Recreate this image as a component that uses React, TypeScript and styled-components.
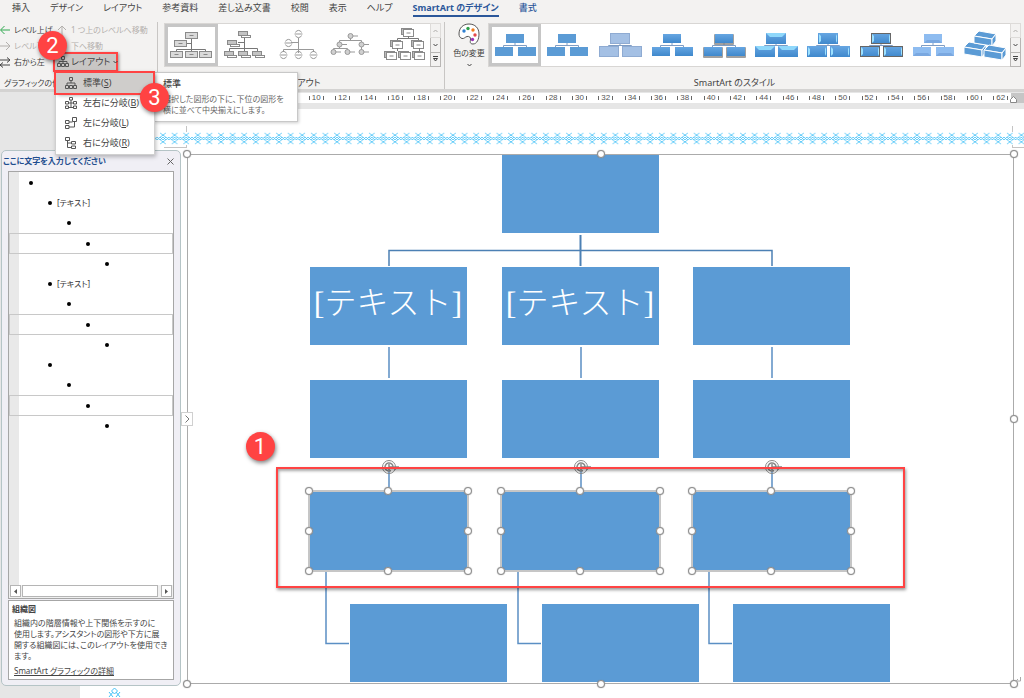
import React from "react";
import styled, { createGlobalStyle, css } from "styled-components";

const BLUE = "#5b9bd5";
const RED = "#ff4343";

const GlobalStyle = createGlobalStyle`
  *, *::before, *::after { box-sizing: border-box; }
  body {
    margin: 0;
    background: #e6e6e6;
    color: #444;
    font-family: "Noto Sans", "Noto Sans CJK JP", sans-serif;
    font-size: 9px;
    line-height: 12px;
    font-feature-settings: "palt";
  }
  button {
    font: inherit;
    font-feature-settings: inherit;
    color: inherit;
    background: none;
    border: 0;
    padding: 0;
    margin: 0;
    white-space: nowrap;
  }
  svg { display: block; flex: none; }
  ul { list-style: none; margin: 0; padding: 0; }
`;

const Page = styled.div`
  display: flex;
  flex-direction: column;
  min-height: 100vh;
  overflow: hidden;
`;

/* ---------- ribbon ---------- */

const Ribbon = styled.header`
  background: #f3f2f1;
  border-bottom: 3px solid #d4d3d2;
  position: relative;
  z-index: 2;
`;

const Tabs = styled.nav`
  display: flex;
  gap: 20px;
  height: 22px;
  padding-left: 12px;
`;

const Tab = styled.button<{ $active?: boolean; $accent?: boolean }>`
  height: 17px;
  padding-top: 1px;
  border-bottom: 2px solid ${(p) => (p.$active ? "#2b579a" : "transparent")};
  color: ${(p) => (p.$accent ? "#2b579a" : "#444")};
  font-weight: ${(p) => (p.$active ? 700 : p.$accent ? 500 : 400)};
`;

const Groups = styled.div`
  display: flex;
  height: 67px;
`;

const Group = styled.section<{ $width?: number }>`
  display: flex;
  flex-direction: column;
  justify-content: space-between;
  ${(p) => (p.$width ? css`flex: none; width: ${p.$width}px;` : css`flex: 1; min-width: 0;`)}
  & + & { border-left: 1px solid #c8c6c4; }
`;

const GroupLabel = styled.div<{ $left?: boolean }>`
  text-align: ${(p) => (p.$left ? "left" : "center")};
  font-size: ${(p) => (p.$left ? 8 : 9)}px;
  padding: 0 4px;
  white-space: nowrap;
`;

const Commands = styled.div`
  display: grid;
  grid-template-columns: 57px 1fr;
  grid-auto-rows: 16px;
  font-size: 8px;
`;

const Command = styled.button`
  display: flex;
  align-items: center;
  gap: 3px;
  &:disabled { color: #b3b0ad; }
`;

const LayoutButton = styled.button`
  display: flex;
  align-items: center;
  align-self: center;
  gap: 2px;
  width: 65px;
  height: 20px;
  margin-left: -4px;
  padding-left: 2px;
  background: #c8c6c4;
  border: 2px solid ${RED};
  box-shadow: 1px 1px 3px rgba(0, 0, 0, 0.4);
  font-size: 9px;
`;

const GroupBody = styled.div`
  display: flex;
  padding: 1px 3px 0 6px;
`;

const Gallery = styled.div`
  display: flex;
  flex: 1;
  min-width: 0;
  height: 44px;
  background: #fff;
  border: 1px solid #d8d6d4;
`;

const GalleryItem = styled.button<{ $selected?: boolean }>`
  display: flex;
  align-items: center;
  justify-content: center;
  flex: 1;
  height: 42px;
  border: 3px solid ${(p) => (p.$selected ? "#c6c6c6" : "transparent")};
  min-width: 0;
`;

const ScrollButtons = styled.div`
  display: flex;
  flex-direction: column;
  width: 11px;
  flex: none;
  margin: -1px;
`;

const ScrollButton = styled.button`
  display: flex;
  align-items: center;
  justify-content: center;
  flex: 1;
  background: #f3f2f1;
  border: 1px solid #b8b6b4;
  &:disabled { border-color: #dddbd9; }
  & + & { border-top-width: 0; }
`;

const ColorButton = styled.button`
  display: flex;
  flex-direction: column;
  align-items: center;
  width: 36px;
  gap: 2px;
  margin-right: 1px;
  font-size: 8px;
`;

/* ---------- drop-down, tooltip, badges ---------- */

const Menu = styled.ul`
  position: absolute;
  left: 55px;
  top: 71px;
  width: 100px;
  padding: 1px 0;
  background: #fff;
  border: 1px solid #d0d0d0;
  box-shadow: 1px 2px 4px rgba(0, 0, 0, 0.25);
`;

const MenuItem = styled.button<{ $active?: boolean }>`
  display: flex;
  align-items: center;
  gap: 6px;
  width: 97px;
  height: 20px;
  padding-left: 9px;
  ${(p) =>
    p.$active &&
    css`
      background: #cfcdcb;
      outline: 2px solid ${RED};
      box-shadow: 2px 2px 4px rgba(0, 0, 0, 0.4);
    `}
`;

const Tooltip = styled.div`
  position: absolute;
  left: 154px;
  top: 72px;
  width: 144px;
  height: 50px;
  padding: 5px 8px;
  background: #fff;
  border: 1px solid #c8c8c8;
  box-shadow: 1px 1px 3px rgba(0, 0, 0, 0.2);
  font-size: 8px;
  line-height: 11px;
  color: #666;
  white-space: nowrap;
  h3 { margin: 0 0 4px; font-size: 9px; line-height: 11px; font-weight: 500; color: #444; }
  p { margin: 0; }
`;

const Badge = styled.span<{ $x: number; $y: number }>`
  position: absolute;
  left: ${(p) => p.$x}px;
  top: ${(p) => p.$y}px;
  width: 29px;
  height: 29px;
  border-radius: 50%;
  background: ${RED};
  color: #fff;
  font: 22px/29px Roboto, sans-serif;
  text-align: center;
  box-shadow: 1px 2px 4px rgba(0, 0, 0, 0.5);
  z-index: 3;
`;

/* ---------- document ---------- */

const Ruler = styled.div`
  display: flex;
  height: 10px;
  margin: 1px 0 6px 80px;
  padding-left: 223px;
  background: linear-gradient(to left, #c6c6c6 13px, #fff 13px);
`;

const RulerCell = styled.span`
  display: flex;
  flex: 1;
  align-items: center;
  justify-content: center;
  gap: 2px;
  font: 8px/10px "Liberation Sans", sans-serif;
  color: #555;
  &::before, &::after { content: ""; width: 1px; height: 4px; background: #666; }
`;

const RulerEnd = styled.span`
  display: flex;
  width: 14px;
  margin-left: -4px;
`;

const Sheet = styled.main`
  flex: 1;
  display: flex;
  flex-direction: column;
  background: linear-gradient(to right, #e6e6e6 80px, #fff 80px);
`;

const SheetTop = styled.div`
  display: grid;
  grid-template-columns: 23px 1fr 12px;
  height: 41px;
  padding: 17px 0 2px 164px;
`;

const CropMark = styled.span<{ $right?: boolean }>`
  grid-row: 1;
  grid-column: ${(p) => (p.$right ? 3 : 1)};
  border: 0 solid #c4c4c4;
  border-bottom-width: 1px;
  ${(p) => (p.$right ? "border-left-width: 1px;" : "border-right-width: 1px;")}
`;

const ArtBorder = styled.div`
  grid-row: 1;
  grid-column: 1 / -1;
  height: 13px;
  margin: 6px 0 0 -30px;
  background: #fff;
  z-index: 1;
`;

const Row = styled.div`
  display: flex;
  flex: 1;
`;

const BottomStrip = styled.div`
  height: 12px;
  padding: 1px 0 0 108px;
  overflow: hidden;
`;

/* ---------- text pane ---------- */

const Pane = styled.aside`
  display: flex;
  flex-direction: column;
  flex: none;
  width: 180px;
  margin-left: 1px;
  padding: 0 6px 5px 6px;
  background: #f0eff5;
  border: 1px solid #b5c4c6;
  border-radius: 5px;
  font-size: 8px;
`;

const PaneHeader = styled.div`
  display: flex;
  align-items: center;
  justify-content: space-between;
  height: 20px;
  margin: 0 0 0 -5px;
  h2 { margin: 0; font-size: 8px; line-height: 12px; font-weight: 700; color: #1f4e8f; }
`;

const Outline = styled.div`
  flex: 1;
  display: flex;
  flex-direction: column;
  justify-content: space-between;
  border: 1px solid #a6a6a6;
  background: linear-gradient(to right, #e9e9e9 10px, #fff 10px);
  ul { padding-top: 1px; }
`;

const OutlineRow = styled.li<{ $level: number; $selected?: boolean }>`
  display: flex;
  align-items: center;
  gap: 5px;
  height: ${(p) => (p.$selected ? 21 : 20)}px;
  padding-left: ${(p) => p.$level * 19}px;
  border: 1px solid ${(p) => (p.$selected ? "#c8c8c8" : "transparent")};
  color: #333;
  &::before { content: ""; width: 4px; height: 4px; border-radius: 50%; background: #000; }
`;

const ScrollBar = styled.div`
  display: flex;
  gap: 1px;
  height: 13px;
  padding: 0 1px 1px;
  background: #f0f0f0;
`;

const ScrollArrow = styled.button`
  display: flex;
  align-items: center;
  justify-content: center;
  width: 11px;
  background: #fff;
  border: 1px solid #b5b5b5;
`;

const Thumb = styled.div`
  flex: 1;
  margin-right: 2px;
  background: #fff;
  border: 1px solid #b5b5b5;
`;

const Description = styled.div`
  margin-top: 1px;
  height: 80px;
  padding: 2px 3px;
  border: 1px solid #a6a6a6;
  background: #fff;
  h3 { margin: 0 0 2px; font-size: 8px; line-height: 12px; }
  p { margin: 0 0 4px 2px; line-height: 11px; white-space: nowrap; }
  a { margin-left: 2px; color: #444; display: block; line-height: 12px; }
`;

/* ---------- diagram ---------- */

const Frame = styled.div`
  position: relative;
  flex: 1;
  display: flex;
  justify-content: center;
  margin: 4px 10px 2px 6px;
  border: 1px solid #ababab;
  background: #fff;
`;

const HandleBox = styled.div`
  position: absolute;
  inset: -1px;
`;

const Handle = styled.i<{ $x: number; $y: number }>`
  position: absolute;
  left: ${(p) => p.$x}%;
  top: ${(p) => p.$y}%;
  width: 8px;
  height: 8px;
  margin: -4px;
  border: 1px solid #8a8a8a;
  border-radius: 50%;
  background: #fff;
  box-shadow: 0 0 1px #8a8a8a;
`;

const PaneToggle = styled.button`
  position: absolute;
  left: -7px;
  top: 257px;
  width: 12px;
  height: 14px;
  display: flex;
  align-items: center;
  justify-content: center;
  background: #fff;
  border: 1px solid #d0d0d0;
`;

const Diagram = styled.div`
  position: relative;
  width: 582px;
  height: 528px;
  flex: none;
`;

const Connectors = styled.svg`
  position: absolute;
  inset: 0;
`;

const Node = styled.div<{ $x: number; $y: number; $selected?: boolean }>`
  position: absolute;
  left: ${(p) => p.$x}px;
  top: ${(p) => p.$y}px;
  width: 157px;
  height: 78px;
  background: ${BLUE};
  color: #fff;
  font: 400 32px/72px "Liberation Serif", "Noto Sans CJK JP", serif;
  font-weight: 300;
  font-feature-settings: normal;
  text-align: center;
  white-space: nowrap;
  ${(p) => p.$selected && css`box-shadow: 0 0 0 2px #c6c6c6;`}
`;

const RotateHandle = styled.svg`
  position: absolute;
  left: 71px;
  top: -33px;
`;

const Highlight = styled.div`
  position: absolute;
  left: -34px;
  top: 312px;
  width: 629px;
  height: 121px;
  border: 2px solid ${RED};
  box-shadow: 1px 2px 3px rgba(0, 0, 0, 0.4), inset 1px 2px 3px rgba(0, 0, 0, 0.35);
`;

const ReturnMark = styled.svg`
  position: absolute;
  right: -8px;
  bottom: 0;
`;

/* ---------- drawings ---------- */

const Arrow = ({ kind }: { kind: "left" | "right" | "up" | "down" | "swap" }) => {
  const paths = {
    left: "M10 5H1M4.500 1L0.500 5L4.500 9",
    right: "M0 5H10M6 1L10 5L6 9",
    up: "M5 10V1M1 5L5 1L9 5",
    down: "M5 0V9M1 5L5 9L9 5",
    swap: "M0 3H10M7 0.500L10 3L7 5.500M10 8H0M3 5.500L0 8L3 10.500",
  };
  const color = kind === "left" ? "#2fa84f" : kind === "swap" ? "#444" : "#b3b0ad";
  return (
    <svg width="11" height="11" viewBox="0 0 11 11" fill="none" stroke={color}>
      <path d={paths[kind]} />
    </svg>
  );
};

const Chevron = ({ up, bar, faint }: { up?: boolean; bar?: boolean; faint?: boolean }) => (
  <svg width="7" height="8" viewBox="0 0 7 8" fill="none" stroke={faint ? "#b0aeac" : "#444"}>
    {bar && <path d="M1 1.500H6" />}
    <path d={up ? "M1.500 5L3.500 3L5.500 5" : bar ? "M1.500 3.500H5.500L3.500 6Z" : "M1.500 3L3.500 5L5.500 3"} />
  </svg>
);

const menuIcons: Record<string, string> = {
  std: "M4.500 .5h3v3h-3zM.5 8.500h3v3h-3zM8.500 8.500h3v3h-3zM6 3.500V6M2 8.500V6h8v2.500M4.500 8.500h3v3h-3z",
  both: "M4.500 .5h3v2.500h-3zM.5 4.500h3v2.500h-3zM8.500 4.500h3v2.500h-3zM.5 9h3v2.500h-3zM8.500 9h3v2.500h-3zM6 3v7.500M3.500 6h5M3.500 10.500h5",
  left: "M7.500 .5h4v4h-4zM.5 3.500h3.500v3h-3.500zM.5 8.500h3.500v3h-3.500zM4 5h3.500M4 10h5.500V4.500",
  right: "M.5 .5h4v3h-4zM6.500 4.500h4v2.500h-4zM6.500 9h4v2.500h-4zM2.500 3.500v7h4M2.500 6h4",
  tree: "M4.500 .5h3v3h-3zM.5 7.500h3v3h-3zM8.500 7.500h3v3h-3zM6 3.500V5.500M2 7.500V5.500h8v2M4.500 7.500h3v3h-3zM6 5.500v2",
};

const MenuIcon = ({ kind }: { kind: string }) => (
  <svg width="12" height="12" viewBox="0 0 12 12" fill="none" stroke="#555">
    <path d={menuIcons[kind]} />
  </svg>
);

const GrayBox = ({ x, y, w = 12, h = 6, fill = "#d9d9d9" }: { x: number; y: number; w?: number; h?: number; fill?: string }) => (
  <g>
    <rect x={x + 0.5} y={y + 0.5} width={w} height={h} fill={fill} stroke="#8a8a8a" />
    <path d={`M${x + w / 2 - 1.5} ${y + h / 2 + 0.5}h4`} stroke="#888" />
  </g>
);

const PlainBox = ({ x, y, w, h, fill }: { x: number; y: number; w: number; h: number; fill: string }) => (
  <rect x={x + 0.5} y={y + 0.5} width={w} height={h} fill={fill} stroke="#8a8a8a" />
);

const layoutDrawings: React.ReactNode[] = [
  <g key="a">
    <path d="M21.500 8V22M13 13.500H21M6.500 21V19.500H35.500V21" stroke="#777" fill="none" />
    <GrayBox x={15} y={2} /><GrayBox x={4} y={10} />
    <GrayBox x={0} y={21} /><GrayBox x={15} y={21} /><GrayBox x={29} y={21} />
  </g>,
  <g key="b">
    <path d="M21.500 7V22M15 12.500H21M6.500 22V18.500H34.500V22" stroke="#777" fill="none" />
    {[[15, 1], [4, 10], [1, 21], [15, 21], [29, 21]].map(([x, y]) => (
      <g key={`${x}-${y}`}>
        <PlainBox x={x} y={y} w={9} h={4} fill="#c4c4c4" />
        <PlainBox x={x + 3} y={y + 4} w={9} h={2} fill="#fff" />
      </g>
    ))}
  </g>,
  <g key="c" fill="none" stroke="#999">
    <path d="M21.500 8V23M14 12.500H21M6.500 22V19.500H36.500V22M21.500 19V22" />
    {[[21.5, 4], [11.5, 13], [6.5, 25], [21.5, 25], [36.5, 25]].map(([x, y]) => (
      <path key={`${x}-${y}`} d={`M${x - 3} ${y - 1.5}a3.200 3.200 0 0 1 6 0M${x - 3} ${y + 1.5}a3.200 3.200 0 0 0 6 0M${x - 4} ${y}h8`} />
    ))}
  </g>,
  <g key="d" stroke="#999" fill="#d0d0d0">
    <path d="M20.500 7V10.500M9.500 14V10.500H31.500V14M3.500 21V18.500H17.500V21M9.500 17V18.500M31.500 17V21" fill="none" />
    {[[20.5, 6], [9.5, 14.5], [31.5, 14.5], [3.5, 22], [17.5, 22], [31.5, 22]].map(([x, y]) => (
      <g key={`${x}-${y}`}><circle cx={x} cy={y} r="2.500" /><path d={`M${x + 2.5} ${y}h5`} /></g>
    ))}
  </g>,
  <g key="e">
    {[[18, -2], [7, 10], [28, 10], [1, 21], [15, 21], [29, 21]].map(([x, y]) => (
      <g key={`${x}-${y}`}>
        <PlainBox x={x} y={y} w={10} h={6} fill="#bbb" />
        <GrayBox x={x + 2} y={y + 1} w={10} h={7} fill="#fff" />
      </g>
    ))}
    <path d="M25.500 6V8.500M14.500 10V8.500H35.500V10M14.500 18V21M36.500 18V21" stroke="#777" fill="none" />
  </g>,
];

const LayoutThumb = ({ index }: { index: number }) => (
  <svg width="43" height="30" viewBox="0 0 43 30" overflow="visible">
    {layoutDrawings[index]}
  </svg>
);

type StyleKind = "flat" | "light" | "grad" | "shadow" | "gloss" | "bevel" | "outline" | "soft" | "brick";

const StyleBox = ({ x, y, kind }: { x: number; y: number; kind: StyleKind }) => {
  const fill = kind === "light" ? "#a4c0e4" : kind === "soft" ? "#8ebcf0" : kind === "flat" ? BLUE : "url(#boxFill)";
  return (
    <g>
      {kind === "shadow" && <rect x={x - 1} y={y} width="20" height="11" rx="1" fill="#777" opacity="0.7" />}
      <rect x={x} y={y} width="18" height="9" fill={fill} />
      {kind === "light" && <rect x={x - 0.5} y={y - 0.5} width="19" height="10" fill="none" stroke="#8fabd2" />}
      {kind === "gloss" && (
        <g>
          <rect x={x - 1} y={y - 1} width="20" height="11" fill="url(#boxFill)" />
          <path d={`M${x - 1} ${y - 1}h20l-4 4h-12z`} fill="#8fd8fb" />
        </g>
      )}
      {(kind === "bevel" || kind === "outline") && (
        <g>
          <rect x={x - 1} y={y - 1} width="20" height="11" fill="url(#boxFill)" />
          <path d={`M${x} ${y}l2 2v5l-2 2zM${x + 18} ${y}l-1 2v5l1 2z`} fill="#9be0ff" />
        </g>
      )}
      {kind === "outline" && <rect x={x - 0.5} y={y - 0.5} width="19" height="10" fill="none" stroke="#666" />}
      {kind === "soft" && <path d={`M${x} ${y + 9}l3-3h12l3 3z`} fill="#7aa8e0" />}
    </g>
  );
};

const Brick = ({ x, y }: { x: number; y: number }) => (
  <g stroke="#fff" strokeWidth="1" fill={BLUE}>
    <path d={`M${x} ${y + 4}l5-5l17 3l-4 5z`} />
    <path d={`M${x} ${y + 4}l18 3v7l-18-3z`} />
    <path d={`M${x + 18} ${y + 7}l4-5v7l-4 5z`} />
  </g>
);

const StyleThumb = ({ kind }: { kind: StyleKind }) =>
  kind === "brick" ? (
    <svg width="42" height="28" viewBox="0 0 42 28" overflow="visible">
      <Brick x={0} y={12} /><Brick x={10} y={1} /><Brick x={20} y={15} />
    </svg>
  ) : (
    <svg width="42" height="24" viewBox="0 0 42 24" overflow="visible">
      <path d="M21 10V12.500M9.500 14.500V12.500H32.500V14.500" fill="none" stroke="#7f9dc4" />
      <StyleBox x={12} y={1} kind={kind} />
      <StyleBox x={1} y={14} kind={kind} />
      <StyleBox x={24} y={14} kind={kind} />
    </svg>
  );

const Palette = () => (
  <svg width="22" height="22" viewBox="0 0 22 22">
    <path
      d="M1 11C1 5 5 1 11 1s10 4 10 10c0 5-2 10-6 10c-3 0-3-2-2.500-4c.5-3-1.500-4-3.500-3.500S6 16 4 15.500S1 13 1 11z"
      fill="#fff" stroke="#555"
    />
    <circle cx="6" cy="8" r="1.700" fill="#2f7fd0" />
    <circle cx="10" cy="5.500" r="1.700" fill="#2ea04a" />
    <circle cx="15" cy="7" r="1.700" fill="#f07c1c" />
    <circle cx="17" cy="12" r="1.700" fill="#e34a4a" />
    <circle cx="14.500" cy="16.500" r="1.700" fill="#9a34b8" />
  </svg>
);

const motif =
  "M3 1l5.600 4.200M8.600 1l-5.600 4.200M3 12l5.600-4.200M8.600 12l-5.600-4.200M0 5l2.900 3l2.900-3l2.900 3l2.900-3M0 8l2.900-3l2.900 3l2.900-3l2.900 3";

/* ---------- data ---------- */

const tabs = ["挿入", "デザイン", "レイアウト", "参考資料", "差し込み文書", "校閲", "表示", "ヘルプ"];
const menu = [
  ["std", "標準", "S"],
  ["both", "左右に分岐", "B"],
  ["left", "左に分岐", "L"],
  ["right", "右に分岐", "R"],
];
const layoutNames = ["組織図", "名前と役職名付き組織図", "半円組織図", "円付き階層", "階層"];
const styleKinds: StyleKind[] = ["flat", "flat", "light", "grad", "shadow", "gloss", "bevel", "outline", "soft", "brick"];
const outline = [
  { level: 1 }, { level: 2, text: "[テキスト]" }, { level: 3 }, { level: 4, selected: true }, { level: 5 },
  { level: 2, text: "[テキスト]" }, { level: 3 }, { level: 4, selected: true }, { level: 5 },
  { level: 2 }, { level: 3 }, { level: 4, selected: true }, { level: 5 },
];
const columns = [0, 192, 383];
const handlePoints = [[0, 0], [50, 0], [100, 0], [0, 50], [100, 50], [0, 100], [50, 100], [100, 100]];

const Handles = () => (
  <HandleBox>
    {handlePoints.map(([x, y]) => (
      <Handle key={`${x}-${y}`} $x={x} $y={y} />
    ))}
  </HandleBox>
);

const GalleryScroll = () => (
  <ScrollButtons>
    <ScrollButton disabled aria-label="上へ"><Chevron up faint /></ScrollButton>
    <ScrollButton aria-label="下へ"><Chevron /></ScrollButton>
    <ScrollButton aria-label="その他"><Chevron bar /></ScrollButton>
  </ScrollButtons>
);

export default function App() {
  return (
    <Page>
      <GlobalStyle />
      <svg width="0" height="0" style={{ position: "absolute" }}>
        <defs>
          <linearGradient id="boxFill" x1="0" y1="0" x2="0" y2="1">
            <stop offset="0" stopColor="#66a6e2" />
            <stop offset="1" stopColor="#3f88cc" />
          </linearGradient>
        </defs>
      </svg>

      <Ribbon>
        <Tabs>
          {tabs.map((t) => <Tab key={t}>{t}</Tab>)}
          <Tab $active $accent>SmartArt のデザイン</Tab>
          <Tab $accent>書式</Tab>
        </Tabs>
        <Groups>
          <Group $width={157}>
            <Commands>
              <Command><Arrow kind="left" />レベル上げ</Command>
              <Command disabled><Arrow kind="up" />1 つ上のレベルへ移動</Command>
              <Command disabled><Arrow kind="right" />レベル下げ</Command>
              <Command disabled><Arrow kind="down" />下へ移動</Command>
              <Command><Arrow kind="swap" />右から左</Command>
              <LayoutButton><MenuIcon kind="tree" />レイアウト<Chevron /></LayoutButton>
            </Commands>
            <GroupLabel $left>グラフィックの作成</GroupLabel>
          </Group>
          <Group $width={287}>
            <GroupBody>
              <Gallery>
                {layoutNames.map((n, i) => (
                  <GalleryItem key={n} $selected={i === 0} aria-label={n}><LayoutThumb index={i} /></GalleryItem>
                ))}
                <GalleryScroll />
              </Gallery>
            </GroupBody>
            <GroupLabel>レイアウト</GroupLabel>
          </Group>
          <Group>
            <GroupBody>
              <ColorButton><Palette />色の変更<Chevron /></ColorButton>
              <Gallery>
                {styleKinds.map((k, i) => (
                  <GalleryItem key={i} $selected={i === 0} aria-label={`スタイル ${i + 1}`}><StyleThumb kind={k} /></GalleryItem>
                ))}
                <GalleryScroll />
              </Gallery>
            </GroupBody>
            <GroupLabel>SmartArt のスタイル</GroupLabel>
          </Group>
        </Groups>

        <Tooltip role="tooltip">
          <h3>標準</h3>
          <p>選択した図形の下に、下位の図形を<br />横に並べて中央揃えにします。</p>
        </Tooltip>
        <Menu>
          {menu.map(([icon, label, key], i) => (
            <li key={key}>
              <MenuItem $active={i === 0}><MenuIcon kind={icon} /><span>{label}(<u>{key}</u>)</span></MenuItem>
            </li>
          ))}
        </Menu>
        <Badge $x={38} $y={31}>2</Badge>
        <Badge $x={140} $y={83}>3</Badge>
      </Ribbon>

      <Ruler>
        {Array.from({ length: 27 }, (_, i) => <RulerCell key={i}>{10 + i * 2}</RulerCell>)}
        <RulerEnd>
          <svg width="7" height="10" viewBox="0 0 7 10"><path d="M.5 9.500V6.500L3.500 3.500L6.500 6.500V9.500z" fill="#fff" stroke="#888" /></svg>
        </RulerEnd>
      </Ruler>

      <Sheet>
        <SheetTop>
          <CropMark />
          <CropMark $right />
          <ArtBorder>
            <svg width="100%" height="13">
              <defs>
                <pattern id="art" width="11.600" height="13" patternUnits="userSpaceOnUse">
                  <path d={motif} fill="none" stroke="#45c2f7" strokeWidth="0.800" />
                </pattern>
              </defs>
              <rect width="100%" height="13" fill="url(#art)" />
            </svg>
          </ArtBorder>
        </SheetTop>

        <Row>
          <Pane>
            <PaneHeader>
              <h2>ここに文字を入力してください</h2>
              <button aria-label="閉じる">
                <svg width="7" height="7" viewBox="0 0 7 7" stroke="#666"><path d="M.5 .5l6 6M6.500 .5l-6 6" /></svg>
              </button>
            </PaneHeader>
            <Outline>
              <ul>
                {outline.map((r, i) => <OutlineRow key={i} $level={r.level} $selected={r.selected}>{r.text}</OutlineRow>)}
              </ul>
              <ScrollBar>
                <ScrollArrow aria-label="左へ"><svg width="3" height="5"><path d="M3 0v5L0 2.500z" fill="#555" /></svg></ScrollArrow>
                <Thumb />
                <ScrollArrow aria-label="右へ"><svg width="3" height="5"><path d="M0 0v5L3 2.500z" fill="#555" /></svg></ScrollArrow>
              </ScrollBar>
            </Outline>
            <Description>
              <h3>組織図</h3>
              <p>組織内の階層情報や上下関係を示すのに<br />使用します。アシスタントの図形や下方に展<br />開する組織図には、このレイアウトを使用でき<br />ます。</p>
              <a href="#details">SmartArt グラフィックの詳細</a>
            </Description>
          </Pane>

          <Frame>
            <Diagram>
              <Connectors width="582" height="528" fill="none" stroke="#5b8fc4" strokeWidth="1.500">
                <path d="M270.500 80V111" stroke="#4c80b4" strokeWidth="2" />
                <path d="M79 111V95.500H462V111" stroke="#4c80b4" />
                {columns.map((x) => (
                  <path key={x} d={`M${x + 79} 192V223M${x + 79} 316V336M${x + 16} 416V488.500H${x + 39}`} />
                ))}
              </Connectors>
              <Node $x={192} $y={0} />
              {columns.map((x, i) => <Node key={x} $x={x} $y={112}>{i < 2 && "[テキスト]"}</Node>)}
              {columns.map((x) => <Node key={x} $x={x} $y={225} />)}
              {columns.map((x) => (
                <Node key={x} $x={x} $y={337} $selected>
                  <Handles />
                  <RotateHandle width="20" height="16" viewBox="0 0 20 16" fill="none" stroke="#8a8a8a">
                    <circle cx="8" cy="8" r="6.500" />
                    <path d="M12 8a4 4 0 1 0-2 3.500M8 5v6M8 8h10M12 8l2 2l3-2" strokeWidth="1.500" />
                  </RotateHandle>
                </Node>
              ))}
              {columns.map((x) => <Node key={x} $x={x + 40} $y={449} />)}
              <Highlight />
              <Badge $x={-64} $y={277}>1</Badge>
            </Diagram>
            <Handles />
            <PaneToggle aria-label="テキスト ウィンドウ">
              <svg width="5" height="8" viewBox="0 0 5 8" fill="none" stroke="#777"><path d="M.5 .5L4 4L.5 7.500" /></svg>
            </PaneToggle>
            <ReturnMark width="6" height="6" viewBox="0 0 6 6" fill="none" stroke="#aaa"><path d="M5.500 0V4H1M3 2L1 4L3 6" /></ReturnMark>
          </Frame>
        </Row>
        <BottomStrip>
          <svg width="13" height="11" viewBox="0 0 13 11" fill="none" stroke="#45c2f7">
            <path d="M6.500 1l3 3l-3 3l-3-3zM1 5l4 5M5 5l-4 5M8 5l4 5M12 5l-4 5" />
          </svg>
        </BottomStrip>
      </Sheet>
    </Page>
  );
}
